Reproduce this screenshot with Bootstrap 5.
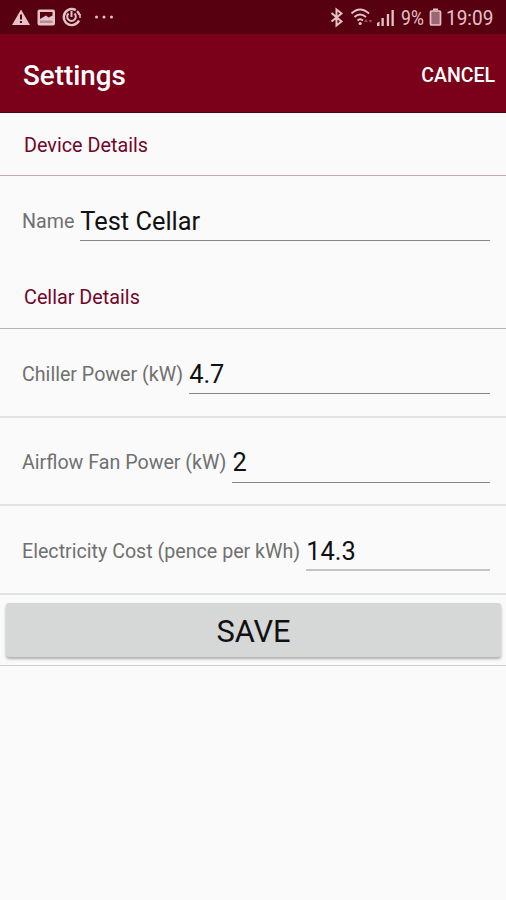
<!DOCTYPE html>
<html lang="en">
<head>
<meta charset="utf-8">
<meta name="viewport" content="width=device-width, initial-scale=1">
<title>Settings</title>
<link href="https://cdn.jsdelivr.net/npm/bootstrap@5.3.0/dist/css/bootstrap.min.css" rel="stylesheet">
<style>
body { font-family: Roboto, sans-serif; background: #fafafa; color: #111; line-height: 1; overflow: hidden; }
.screen { height: 900px; }
.status { height: 34px; background: #560010; color: #e3c3c8; padding: 0 13px 0 12px; }
.status svg { display: block; flex: none; }
.pct { font-size: 20px; width: 24px; margin-left: 5px; padding-top: 1px; }
.clock { font-size: 20px; margin-left: 4px; width: 47px; padding-top: 1px; }
.squeeze { display: inline-block; transform-origin: 0 50%; white-space: nowrap; }
.pct .squeeze { transform: scaleX(.88); }
.clock .squeeze { transform: scaleX(.95); }
.appbar { height: 79px; background: #7b001a; border-bottom: 1px solid #4d0510; color: #fff; padding: 5px 11px 0 23px; }
.appbar h1 { font-size: 27.8px; font-weight: 500; line-height: 1; }
.cancel, .cancel:hover { font-size: 19.5px; font-weight: 500; color: #fff; line-height: 1; }
.group-head { height: 63px; font-size: 19.8px; color: #71062a; padding: 3px 24px 0 24px; border-bottom: 1px solid #c9a9b1; }
.group-head.second { height: 64px; border-bottom-color: #b9b3b5; }
.setting { height: 88.6px; padding: 20px 16px 0 22px; border-bottom: 2px solid #e1e2e2; }
.setting.open { height: 89px; border-bottom: 0; }
.setting label { font-size: 19.65px; color: #707070; white-space: nowrap; height: 48px; padding-top: 15.6px; }
.value { font-size: 25.4px; height: 45px; padding: 12.6px 0 0; margin-left: 6px; border-bottom: 1px solid #858585; }
.value.soft { border-bottom: 2px solid #c4c4c4; }
.save-row { height: 71px; padding: 8px 5px 0 6px; border-bottom: 1px solid #cfd0d0; }
.save { height: 54px; background: #d6d7d7; color: #111; font-size: 30.8px; line-height: 1; border: 0; border-radius: 3px; box-shadow: 0 2px 3px rgba(0,0,0,.32); }
.save.btn { padding: 5px 0 0; }
</style>
</head>
<body>
<div class="screen d-flex flex-column">
  <div class="status d-flex align-items-center">
    <svg width="106" height="34" viewBox="12 0 106 34" fill="#e3c3c8">
      <path d="M21 9.500 30 25H12z"/><path d="M20 14.500h2v5h-2zM20 21h2v2h-2z" fill="#560010"/>
      <rect x="37.500" y="9.500" width="17.500" height="16" rx="2"/>
      <path d="M40 12h12.500v3.500l-4 2-2.500-2L40 19z" fill="#560010"/><path d="M40 20.500h12.500V23H40z" fill="#b58c94"/>
      <g fill="none" stroke="#e3c3c8"><path d="M79 20.500A8 8 0 1 1 79.500 15" stroke-width="2.400" stroke-dasharray="38 1.500"/><path d="M68.500 13.500a4.300 4.300 0 1 0 6 0M71.500 11v6" stroke-width="2"/><path d="M80 14v4" stroke-width="1.500"/></g>
      <circle cx="96.500" cy="17" r="1.500"/><circle cx="104" cy="17" r="1.500"/><circle cx="111.500" cy="17" r="1.500"/>
    </svg>
    <svg class="ms-auto" width="66" height="34" viewBox="330 0 66 34">
      <path d="M331.500 13l10 8.500-5 4V9.500l5 4-10 8" fill="none" stroke="#e3c3c8" stroke-width="2"/>
      <g fill="none" stroke="#e3c3c8" stroke-width="2"><path d="M351.500 13.500Q360 5.500 369 13.500M354.500 17Q360 12 366 17M357.500 20.500Q360 18 363 20.500"/></g>
      <circle cx="360.200" cy="23.500" r="1.600" fill="#e3c3c8"/>
      <path d="M366 19l2 3h-4zM370.500 23l2-3h-4z" fill="#95475a"/>
      <path d="M377 26v-3l2.500-1.500V26zM381.500 26v-8h2.300v8zM386.800 26V14h2.300v12zM391.500 26V10h2.300v16z" fill="#e3c3c8"/>
    </svg>
    <span class="pct"><span class="squeeze">9%</span></span>
    <svg width="13" height="34" viewBox="0 0 13 34" class="ms-1"><path d="M4 8.500h5v2H4z" fill="#e3c3c8"/><rect x="1.500" y="11" width="10" height="14" rx="1" fill="#9b6671" stroke="#e3c3c8" stroke-width="1.700"/></svg>
    <span class="clock"><span class="squeeze">19:09</span></span>
  </div>
  <header class="appbar d-flex align-items-center justify-content-between">
    <h1 class="m-0">Settings</h1>
    <button type="button" class="cancel btn p-0 border-0">CANCEL</button>
  </header>
  <main>
    <div class="group-head d-flex align-items-center">Device Details</div>
    <div class="setting open d-flex"><label>Name</label><div class="value flex-grow-1">Test Cellar</div></div>
    <div class="group-head second d-flex align-items-center">Cellar Details</div>
    <div class="setting d-flex"><label>Chiller Power (kW)</label><div class="value flex-grow-1">4.7</div></div>
    <div class="setting d-flex"><label>Airflow Fan Power (kW)</label><div class="value flex-grow-1">2</div></div>
    <div class="setting d-flex"><label>Electricity Cost (pence per kWh)</label><div class="value soft flex-grow-1">14.3</div></div>
    <div class="save-row"><button type="button" class="save btn w-100">SAVE</button></div>
  </main>
</div>
<script src="https://cdn.jsdelivr.net/npm/bootstrap@5.3.0/dist/js/bootstrap.bundle.min.js"></script>
</body>
</html>
